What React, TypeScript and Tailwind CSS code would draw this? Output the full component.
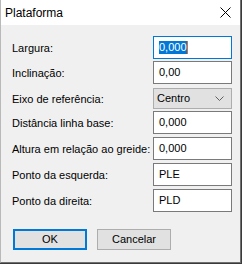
import React from "react";

const font = { fontFamily: '"Liberation Sans", Arial, sans-serif' };

function Row({ label, value, mt, focused }: { label: string; value: string; mt: string; focused?: boolean }) {
  return (
    <div className={`flex items-center h-[23px] ${mt}`}>
      <div className="w-[152px] shrink-0 whitespace-nowrap pl-[11px] pt-[2px] text-[11px] text-black leading-none">{label}</div>
      <div
        className={`w-[79px] shrink-0 h-[23px] border ${focused ? "border-[#0078d7]" : "border-[#7a7a7a]"} bg-white flex items-start pl-[5px] pt-[4px] text-[11px] leading-[13px] text-black`}
      >
        {focused ? (
          <span className="flex items-center">
            <span className="bg-[#0078d7] text-white h-[13px] leading-[13px]">{value}</span>
            <span className="w-[1px] h-[13px] bg-[#e07020]" />
          </span>
        ) : (
          <span>{value}</span>
        )}
      </div>
    </div>
  );
}

export default function App() {
  return (
    <div className="w-[242px] h-[264px] bg-[#3a3a3a] overflow-hidden" style={font}>
      <div className="w-[241px] h-[263px] bg-[#f0f0f0] border-r border-b border-l border-[#707070] border-l-[#b9b9b9] flex flex-col">
        <div className="h-[25px] bg-white flex items-center justify-between pl-[4px] pr-[9px]">
          <span className="text-[12px] text-black pt-[1px]">Plataforma</span>
          <svg width="11" height="11" viewBox="0 0 11 11">
            <path d="M0.5 0.5 L10.5 10.5 M10.5 0.5 L0.5 10.5" stroke="#000" strokeWidth="1" />
          </svg>
        </div>
        <Row label="Largura:" value="0,000" mt="mt-[11px]" focused />
        <Row label="Inclinação:" value="0,00" mt="mt-[2px]" />
        <div className="flex items-center h-[21px] mt-[4px]">
          <div className="w-[152px] shrink-0 whitespace-nowrap pl-[11px] pt-[2px] text-[11px] text-black leading-none">Eixo de referência:</div>
          <div className="w-[79px] shrink-0 h-[21px] border border-[#adadad] bg-[#e1e1e1] flex items-center justify-between pl-[3px] pr-[7px] text-[11px] text-black">
            <span>Centro</span>
            <svg width="9" height="5" viewBox="0 0 9 5">
              <path d="M0.5 0.5 L4.5 4.5 L8.5 0.5" stroke="#606060" strokeWidth="1" fill="none" />
            </svg>
          </div>
        </div>
        <Row label="Distância linha base:" value="0,000" mt="mt-[2px]" />
        <Row label="Altura em relação ao greide:" value="0,000" mt="mt-[3px]" />
        <Row label="Ponto da esquerda:" value="PLE" mt="mt-[3px]" />
        <Row label="Ponto da direita:" value="PLD" mt="mt-[3px]" />
        <div className="flex mt-[17px] pl-[12px] gap-[10px]">
          <div className="w-[74px] h-[21px] border-2 border-[#0078d7] bg-[#e1e1e1] flex items-center justify-center text-[11px] text-black">
            OK
          </div>
          <div className="w-[74px] h-[21px] border border-[#adadad] bg-[#e1e1e1] flex items-center justify-center text-[11px] text-black">
            Cancelar
          </div>
        </div>
      </div>
    </div>
  );
}
